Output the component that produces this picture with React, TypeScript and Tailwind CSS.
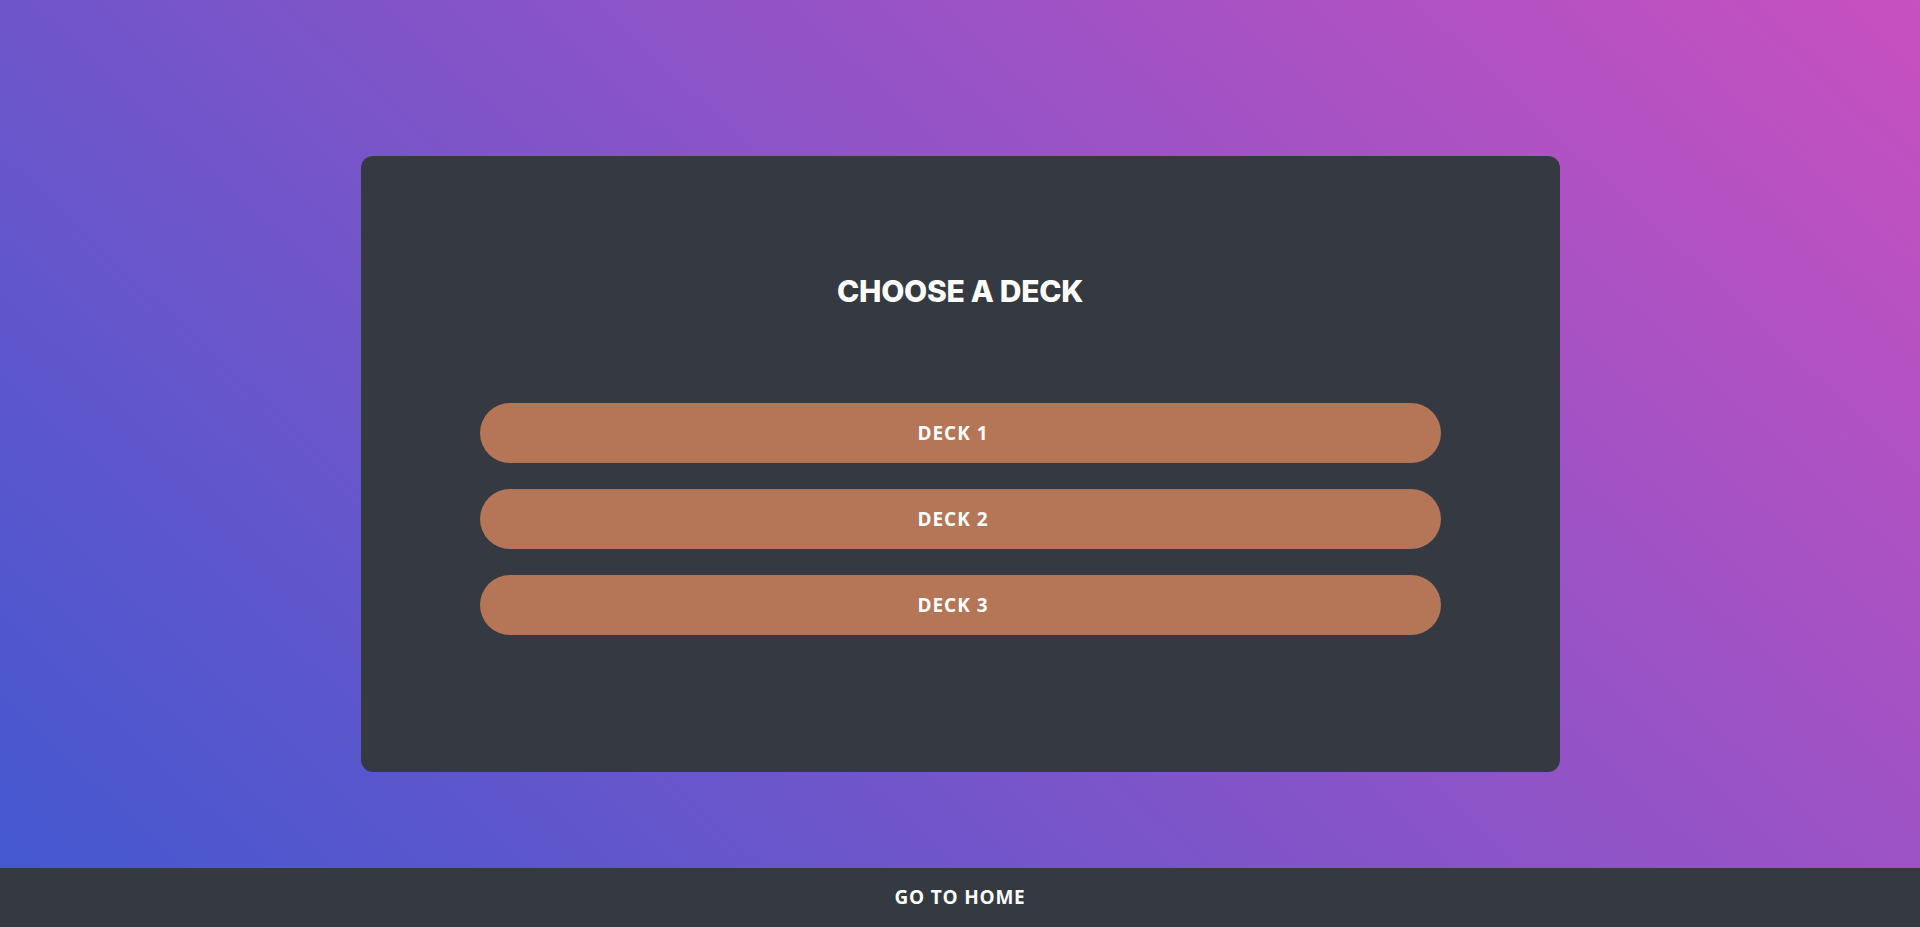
import React from 'react';

const decks = ['DECK 1', 'DECK 2', 'DECK 3'];

export default function App() {
  return (
    <div className="flex h-screen flex-col bg-[linear-gradient(43deg,#4158d0_0%,#c850c0_100%)] font-['Open_Sans',sans-serif]">
      <main className="flex flex-1 justify-center pt-[156px]">
        <div className="flex h-[616px] w-[1199px] flex-col items-center rounded-xl bg-[#353a42]">
          <h1 className="mt-[115px] text-[30px] leading-[40px] font-extrabold tracking-[-0.3px] text-white font-['Inter',sans-serif]">
            CHOOSE A DECK
          </h1>
          <div className="mt-[92px] flex w-[961px] flex-col gap-[26px]">
            {decks.map((d) => (
              <button
                key={d}
                className="h-[60px] w-full rounded-full bg-[#b47656] pr-[14px] text-[19px] font-bold tracking-[1px] text-white"
              >
                {d}
              </button>
            ))}
          </div>
        </div>
      </main>
      <footer className="flex h-[59px] items-center justify-center bg-[#353a42]">
        <span className="text-[19px] font-bold tracking-[0.8px] text-white">GO TO HOME</span>
      </footer>
    </div>
  );
}
